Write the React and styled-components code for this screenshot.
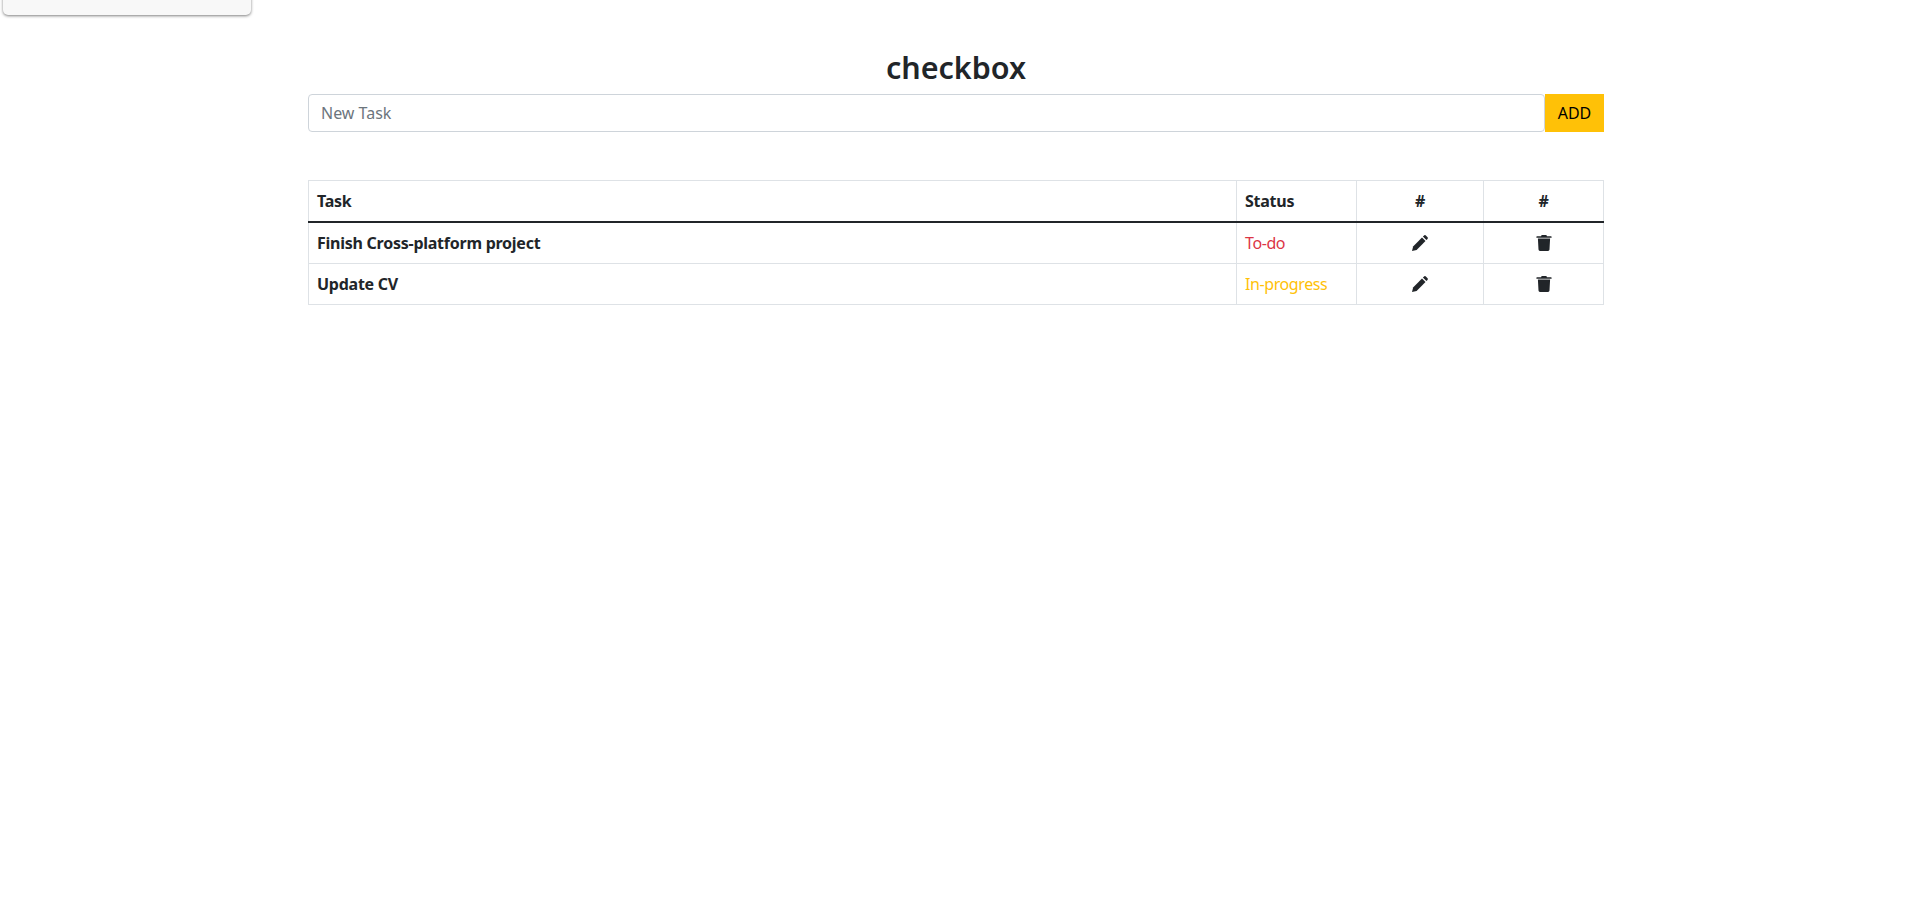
import React from 'react';
import styled, { createGlobalStyle } from 'styled-components';

const tasks = [
	{ name: 'Finish Cross-platform project', status: 'To-do', color: '#dc3545' },
	{ name: 'Update CV', status: 'In-progress', color: '#ffc107' }
];

const PencilIcon = () => (
	<Icon viewBox="0 0 16 16">
		<path d="M0 16l1.1-4.6 8.9-8.9 3.5 3.5-8.9 8.9z" />
		<path d="M10.9 1.6l.9-.9a1.6 1.6 0 0 1 2.3 0l1.2 1.2a1.6 1.6 0 0 1 0 2.3l-.9.9z" />
	</Icon>
);

const TrashIcon = () => (
	<Icon viewBox="0 0 16 16">
		<path d="M5.6 0h4.8l.5 1.2H15a.6.6 0 0 1 .6.6v.9H.4v-.9a.6.6 0 0 1 .6-.6h4.1z" />
		<path d="M1.9 3.6h12.2l-.6 11a1.5 1.5 0 0 1-1.5 1.4H4a1.5 1.5 0 0 1-1.5-1.4z" />
	</Icon>
);

const App = () => (
	<>
		<GlobalStyle />
		<Popup />
		<Container>
			<Title>checkbox</Title>
			<InputRow>
				<TaskInput placeholder="New Task" />
				<AddButton>ADD</AddButton>
			</InputRow>
			<Table>
				<colgroup>
					<col />
					<col width="120" />
					<col width="127" />
					<col width="120" />
				</colgroup>
				<thead>
					<tr>
						<HeadCell>Task</HeadCell>
						<HeadCell>Status</HeadCell>
						<HeadCell center>#</HeadCell>
						<HeadCell center>#</HeadCell>
					</tr>
				</thead>
				<tbody>
					{tasks.map(task => (
						<tr key={task.name}>
							<TaskCell>{task.name}</TaskCell>
							<StatusCell color={task.color}>{task.status}</StatusCell>
							<IconCell>
								<PencilIcon />
							</IconCell>
							<IconCell>
								<TrashIcon />
							</IconCell>
						</tr>
					))}
				</tbody>
			</Table>
		</Container>
	</>
);

export default App;

const GlobalStyle = createGlobalStyle`
	* {
		box-sizing: border-box;
	}

	body {
		margin: 0;
		background: #fff;
		color: #212529;
		font-family: 'Noto Sans', 'Open Sans', sans-serif;
		font-size: 16px;
		line-height: 1.5;
	}
`;

const Popup = styled.div`
	position: absolute;
	top: -20px;
	left: 3px;
	width: 248px;
	height: 35px;
	background: #f8f8f8;
	border-radius: 5px;
	box-shadow: 0 1px 3px rgba(0, 0, 0, 0.5);
`;

const Container = styled.div`
	width: 1296px;
	margin: 0 auto;
	padding-top: 48px;
`;

const Title = styled.h2`
	margin: 0 0 8px;
	font-size: 30.5px;
	font-weight: 600;
	line-height: 38px;
	text-align: center;
`;

const InputRow = styled.div`
	display: flex;
	height: 38px;
	margin-bottom: 48px;
`;

const TaskInput = styled.input`
	flex: 1;
	min-width: 0;
	padding: 6px 12px;
	border: 1px solid #ced4da;
	border-radius: 4px;
	font: inherit;
	color: #212529;

	&::placeholder {
		color: #6c757d;
	}
`;

const AddButton = styled.button`
	width: 59px;
	padding: 0;
	border: 1px solid #ffc107;
	background: #ffc107;
	color: #000;
	font: inherit;
`;

const Table = styled.table`
	width: 100%;
	table-layout: fixed;
	border-collapse: collapse;
`;

const HeadCell = styled.th`
	height: 41px;
	padding: 1px 8px 0;
	border: 1px solid #dee2e6;
	border-bottom: 2px solid #212529;
	text-align: ${props => (props.center ? 'center' : 'left')};
	font-weight: 700;
	letter-spacing: -0.25px;
`;

const TaskCell = styled.td`
	height: 41.5px;
	padding: 0 8px;
	border: 1px solid #dee2e6;
	font-weight: 700;
	letter-spacing: -0.25px;
`;

const StatusCell = styled.td`
	padding: 0 8px;
	border: 1px solid #dee2e6;
	letter-spacing: -0.4px;
	color: ${props => props.color};
`;

const IconCell = styled.td`
	padding: 0 8px;
	border: 1px solid #dee2e6;
	text-align: center;
	line-height: 0;
`;

const Icon = styled.svg`
	width: 16px;
	height: 16px;
	fill: #212529;
`;
